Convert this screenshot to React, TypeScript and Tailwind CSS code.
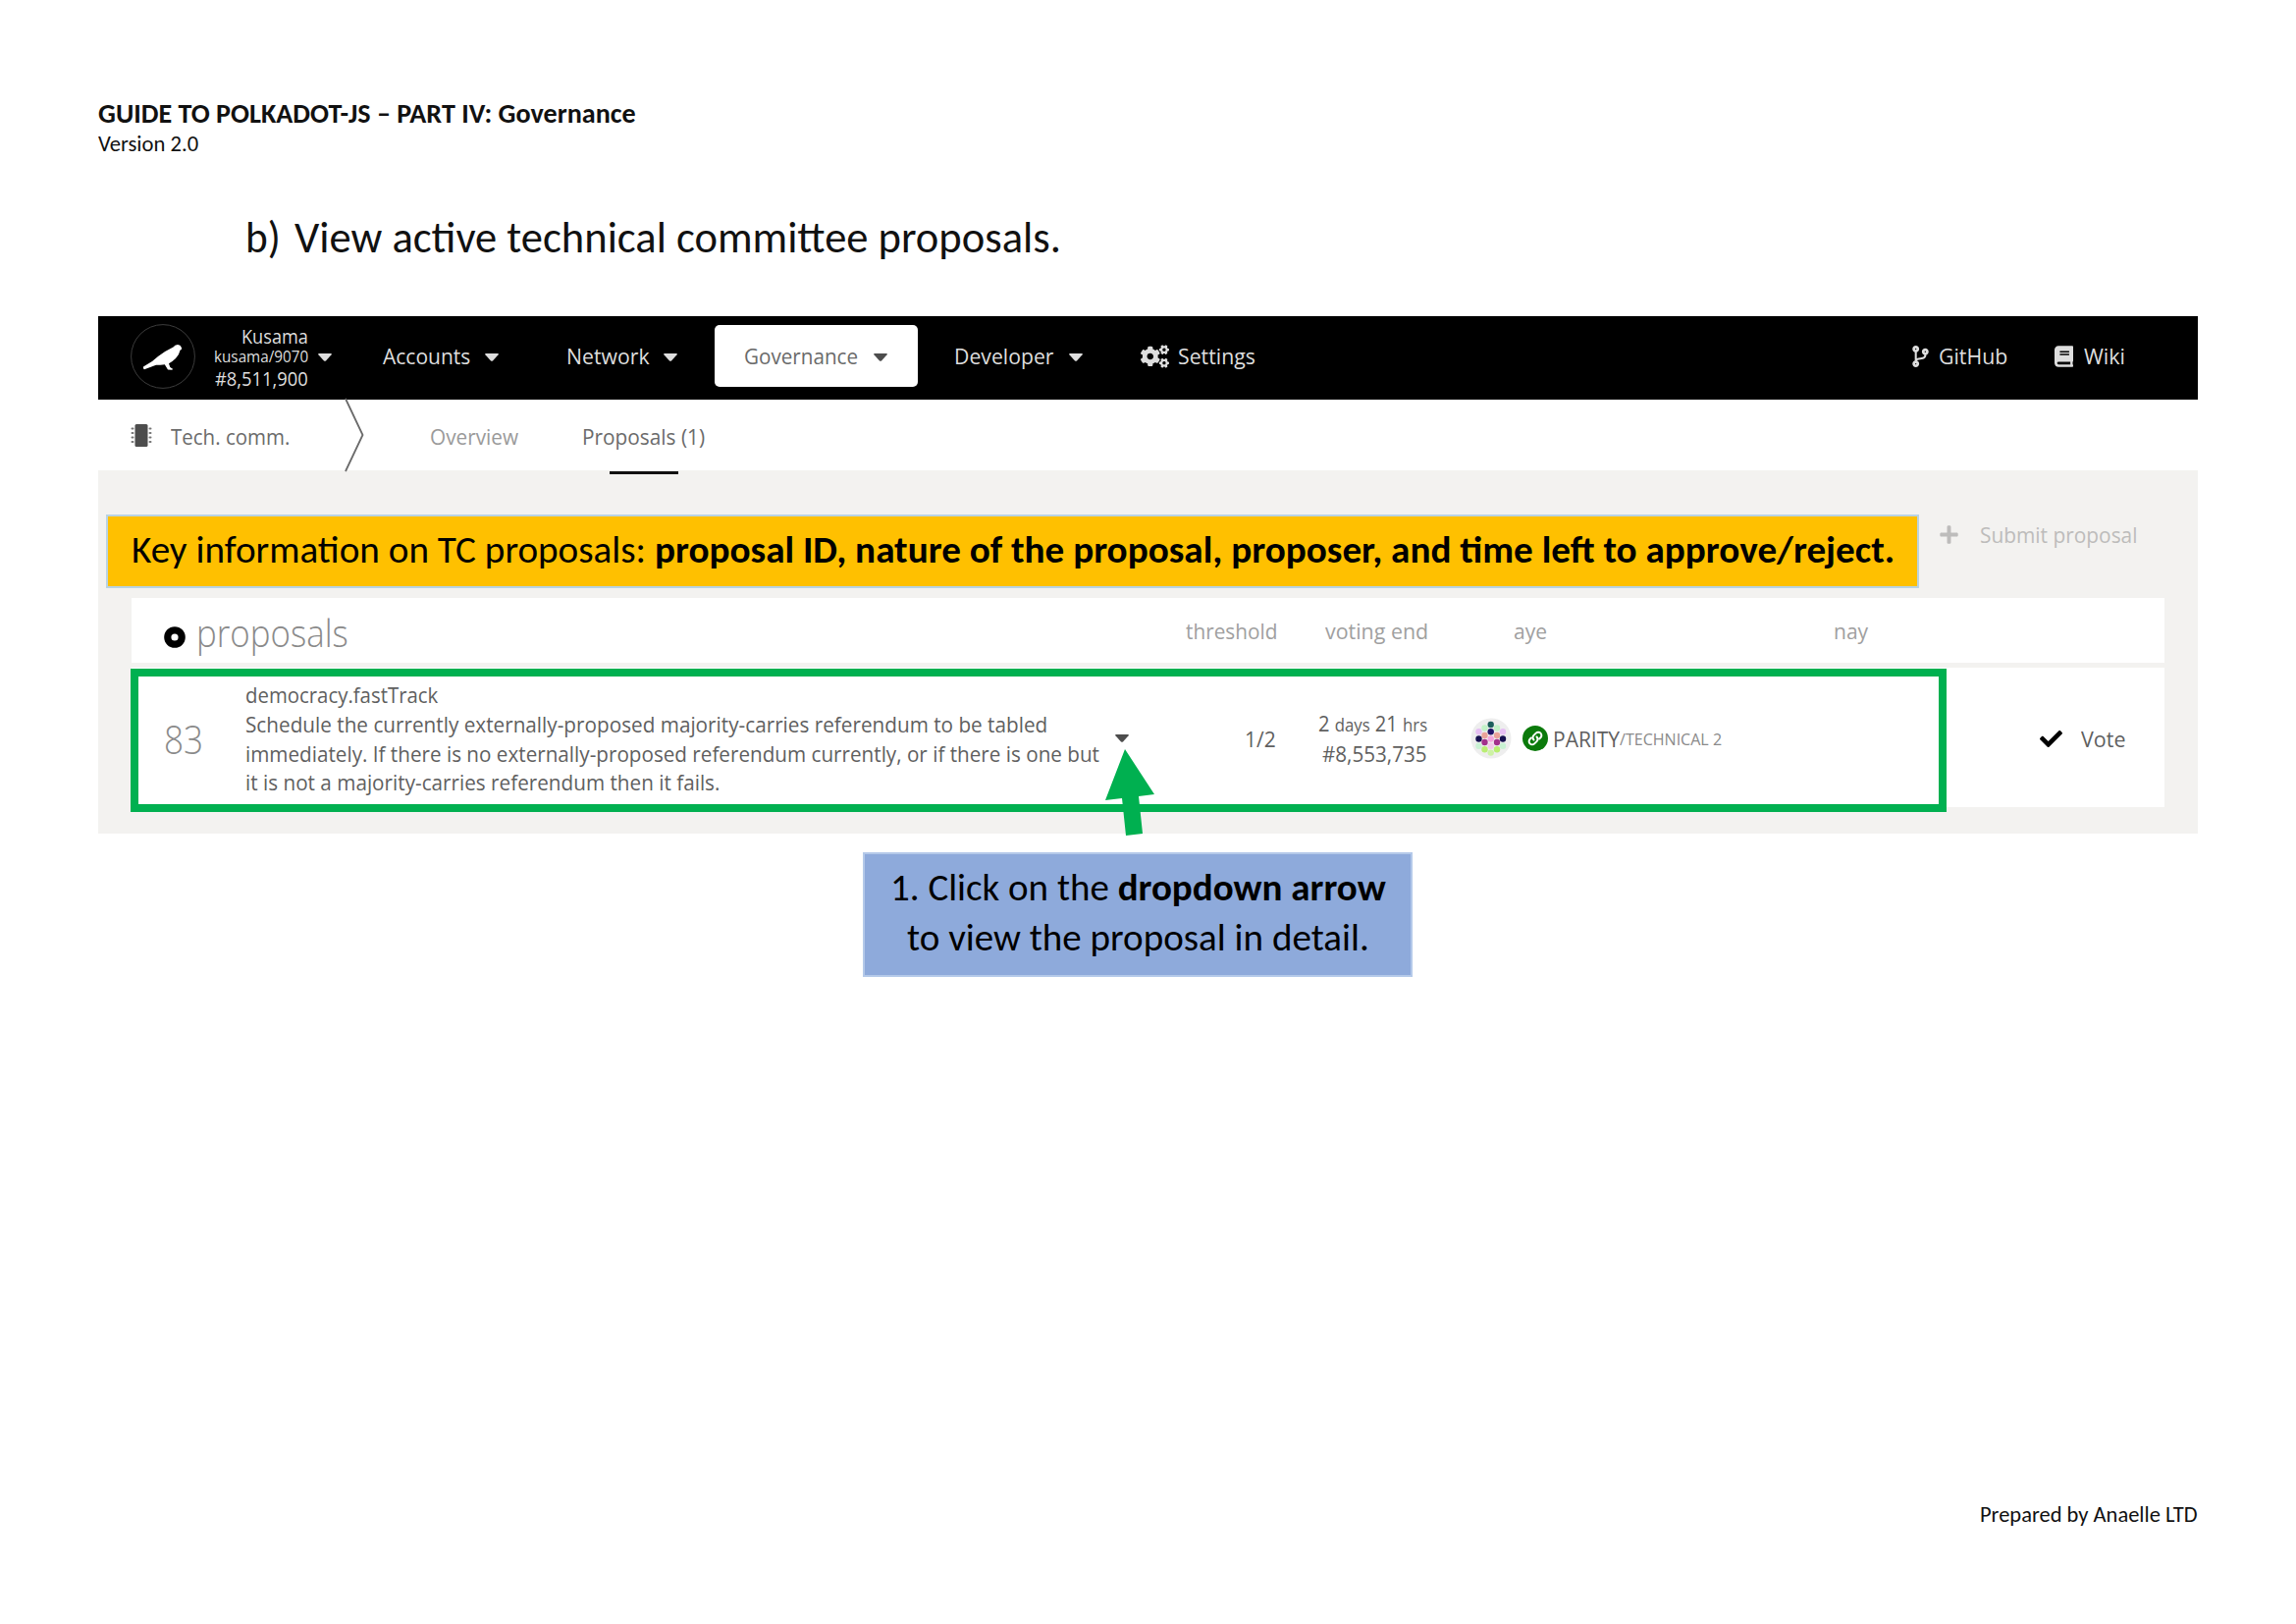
import { useLayoutEffect, useRef, useState, type ReactNode } from "react";
import { FaCheck, FaPlus, FaCogs, FaCodeBranch, FaBook } from "react-icons/fa";

/* One line of text condensed horizontally to a given advance width. */
function Line({ w, className = "", children }: { w: number; className?: string; children: ReactNode }) {
  const ref = useRef<HTMLSpanElement>(null);
  const [scale, setScale] = useState(1);
  useLayoutEffect(() => {
    const el = ref.current;
    if (el && el.offsetWidth > 0) setScale(w / el.offsetWidth);
  }, [w]);
  return (
    <span className={`block shrink-0 whitespace-nowrap ${className}`} style={{ width: w }}>
      <span ref={ref} className="inline-block origin-left" style={{ transform: `scaleX(${scale})` }}>
        {children}
      </span>
    </span>
  );
}

function Caret({ className = "" }: { className?: string }) {
  return (
    <svg viewBox="0 0 14 8" className={`h-[8px] w-[14px] shrink-0 ${className}`} fill="currentColor">
      <path d="M1 0h12q1.4.2.6 1.3L8 7.4q-1 .9-2 0L.4 1.3Q-.4.2 1 0Z" />
    </svg>
  );
}

function Bird() {
  return (
    <svg viewBox="0 0 66 66" className="ml-[33px] h-[66px] w-[66px] shrink-0">
      <circle cx="33" cy="33" r="32.4" fill="#000" stroke="#3c3c3c" strokeWidth="1" />
      <path
        fill="#fff"
        d="M13 43.500 22 38 28 33Q35 27.500 43.500 23.500Q45 21 48 21q3 .2 3.800 2.800l.4 1.700-1.700 1.200q-1 4.800-4.500 8.300-3 3-7 5.200l1.300 3.800 2.700 1.800-.6.900-4.400-.3-3.200-5.200q-4.500.5-8.800.6L14 46.300q-1.500-.8-1-2.800Z"
      />
    </svg>
  );
}

function Chip() {
  return (
    <svg viewBox="0 0 23 23" className="ml-[33px] mt-[1px] h-[23px] w-[23px] shrink-0" fill="#4d4d4d">
      <rect x="4.500" y="0" width="13" height="23" rx="1.500" />
      {[3.5, 8, 12.5, 17].map((y) => (
        <g key={y} fill="#777">
          <rect x="0.500" y={y} width="3" height="2" rx="1" />
          <rect x="18.500" y={y} width="3" height="2" rx="1" />
        </g>
      ))}
    </svg>
  );
}

const dots: [number, number, string][] = [
  [20.7, 7, "#1d5f5c"],
  [14.5, 10.5, "#c3f2c8"],
  [27, 10.5, "#c3f2c8"],
  [8.5, 14.3, "#e6bff3"],
  [20.7, 14.3, "#1f1468"],
  [33, 14.3, "#e6bff3"],
  [14.5, 18, "#eba39a"],
  [27, 18, "#eba39a"],
  [20.7, 21.5, "#f3a6dd"],
  [8.5, 21.5, "#16104f"],
  [33, 21.5, "#16104f"],
  [14.5, 25, "#a3308c"],
  [27, 25, "#a3308c"],
  [8.5, 28.7, "#c9f2d3"],
  [33, 28.7, "#c9f2d3"],
  [20.7, 28.7, "#f3c9ea"],
  [14.5, 32.3, "#b9ee72"],
  [27, 32.3, "#b9ee72"],
  [20.7, 35.6, "#cdf2a4"],
];

function Identicon() {
  return (
    <svg viewBox="0 0 42 42" className="ml-[44px] h-[42px] w-[42px] shrink-0">
      <circle cx="21" cy="21" r="20.5" fill="#eeeeee" />
      {dots.map(([x, y, c], i) => (
        <circle key={i} cx={x} cy={y} r="3.2" fill={c} />
      ))}
    </svg>
  );
}

function LinkBadge() {
  return (
    <svg viewBox="0 0 26 26" className="ml-[11px] h-[26px] w-[26px] shrink-0" fill="none">
      <circle cx="13" cy="13" r="13" fill="#0b7a0b" />
      <g stroke="#fff" strokeWidth="2" strokeLinecap="round">
        <path d="M11.5 14.5a3.2 3.2 0 0 1 0-4.600l2.300-2.300a3.200 3.200 0 0 1 4.600 4.600l-1.300 1.300" />
        <path d="M14.5 11.5a3.2 3.2 0 0 1 0 4.600l-2.300 2.300a3.200 3.200 0 0 1-4.600-4.600l1.300-1.300" />
      </g>
    </svg>
  );
}

function NavBar() {
  return (
    <nav className="flex h-[85px] items-center bg-black pb-[4px] text-[21px] leading-[30px] text-[#dedede]">
      <Bird />
      <div className="ml-[17px] flex w-[98px] flex-col items-end pt-[5px] text-[19.5px]">
        <Line w={68} className="leading-[20px]">Kusama</Line>
        <Line w={96} className="text-[17px] leading-[20px]">kusama/9070</Line>
        <Line w={95} className="leading-[25px]">#8,511,900</Line>
      </div>
      <Caret className="ml-[10px] mt-[3px]" />
      <Line w={89} className="ml-[52px]">Accounts</Line>
      <Caret className="ml-[15px] mt-[3px]" />
      <Line w={85} className="ml-[69px]">Network</Line>
      <Caret className="ml-[14px] mt-[3px]" />
      <div className="ml-[38px] flex h-[63px] w-[207px] shrink-0 items-center rounded-[5px] bg-white text-[#6a6a6a]">
        <Line w={116} className="ml-[30px]">Governance</Line>
        <Caret className="ml-[16px] mt-[3px] text-[#4d4d4d]" />
      </div>
      <Line w={101} className="ml-[37px]">Developer</Line>
      <Caret className="ml-[16px] mt-[3px]" />
      <FaCogs className="ml-[59px] h-[24px] w-[29px] shrink-0" />
      <Line w={79} className="ml-[9px]">Settings</Line>
      <FaCodeBranch className="ml-[668px] h-[22px] w-[19px] shrink-0" />
      <Line w={70} className="ml-[9px]">GitHub</Line>
      <FaBook className="ml-[48px] h-[22px] w-[19px] shrink-0" />
      <Line w={42} className="ml-[11px]">Wiki</Line>
    </nav>
  );
}

function Tabs() {
  return (
    <div className="flex h-[72px] items-center bg-white text-[21px] leading-[30px] text-[#6b6b6b]">
      <Chip />
      <Line w={121} className="ml-[18px] mt-[3px]">Tech. comm.</Line>
      <svg viewBox="0 0 20 74" className="ml-[56px] h-[74px] w-[20px] shrink-0 overflow-visible" fill="none">
        <path d="M1 0 18.5 37 1 74" stroke="#6a6a6a" strokeWidth="1.8" />
      </svg>
      <Line w={90} className="ml-[67px] mt-[3px] text-[#9a9a9a]">Overview</Line>
      <div className="relative ml-[65px] mt-[3px]">
        <Line w={125}>Proposals (1)</Line>
        <div className="absolute left-[28px] top-[50px] h-[3.5px] w-[70px] bg-[#111]" />
      </div>
    </div>
  );
}

function Proposals() {
  return (
    <section className="h-[370px] bg-[#f3f2f0] pl-[34px] pr-[34px] text-[21px] leading-[30px]">
      <div className="flex h-[130px] items-center justify-end pr-[28px] pt-[1px] text-[#bdbcbb]">
        <FaPlus className="h-[21px] w-[21px] shrink-0" />
        <Line w={160} className="ml-[21px]">Submit proposal</Line>
      </div>
      <div className="flex h-[66px] items-center bg-white text-[#a0a0a0]">
        <svg viewBox="0 0 22 22" className="ml-[33px] mt-[13px] h-[22px] w-[22px] shrink-0">
          <circle cx="11" cy="11" r="7.2" fill="#fff" stroke="#000" strokeWidth="7.2" />
        </svg>
        <Line w={155} className="ml-[11px] mt-[3px] text-[38px] font-light leading-[50px] text-[#8a8a8a]">proposals</Line>
        <Line w={93} className="ml-[853px] mt-[1px]">threshold</Line>
        <Line w={105} className="ml-[49px] mt-[1px]">voting end</Line>
        <Line w={34} className="ml-[87px] mt-[1px]">aye</Line>
        <Line w={35} className="ml-[292px] mt-[1px]">nay</Line>
      </div>
      <div className="mt-[5px] flex h-[142px] items-center bg-white pt-[2px] text-[#5f5f5f]">
        <Line w={40} className="ml-[33px] mt-[1px] text-[39.5px] font-light leading-[50px] text-[#8a8a8a]">83</Line>
        <div className="ml-[43px] mt-[3px] flex w-[880px] shrink-0 flex-col leading-[29.8px]">
          <Line w={196}>democracy.fastTrack</Line>
          <Line w={817}>Schedule the currently externally-proposed majority-carries referendum to be tabled</Line>
          <Line w={870}>immediately. If there is no externally-proposed referendum currently, or if there is one but</Line>
          <Line w={483}>it is not a majority-carries referendum then it fails.</Line>
        </div>
        <Caret className="ml-[6px] text-[#4d4d4d]" />
        <Line w={32} className="ml-[118px] mt-[1px]">1/2</Line>
        <div className="ml-[43px] flex w-[111px] shrink-0 flex-col items-end">
          <Line w={111}>
            2 <span className="text-[17.5px]">days</span> 21 <span className="text-[17.5px]">hrs</span>
          </Line>
          <Line w={107}>#8,553,735</Line>
        </div>
        <Identicon />
        <LinkBadge />
        <Line w={68} className="ml-[5px] mt-[1px]">PARITY</Line>
        <Line w={104} className="mt-[1px] text-[16.5px] text-[#8a8a8a]">/TECHNICAL 2</Line>
        <FaCheck className="ml-[324px] h-[23px] w-[23px] shrink-0 text-black" />
        <Line w={45} className="ml-[19px] mt-[1px]">Vote</Line>
      </div>
    </section>
  );
}

export default function App() {
  return (
    <main className="h-[1654px] w-[2339px] overflow-hidden bg-white px-[100px] pt-[101px] font-['Carlito','Lato',sans-serif] text-[#111]">
      <header>
        <Line w={548} className="text-[27.8px] font-bold leading-[30px]">GUIDE TO POLKADOT-JS – PART IV: Governance</Line>
        <Line w={102} className="text-[22.2px] leading-[31px]">Version 2.0</Line>
      </header>
      <h1 className="mt-[50px] flex pl-[150px] text-[44.4px] leading-[60px]">
        <Line w={36}>b)</Line>
        <Line w={781} className="ml-[14px]">View active technical committee proposals.</Line>
      </h1>
      <div className="relative mt-[50px] font-['Open_Sans','Noto_Sans',sans-serif]">
        <NavBar />
        <Tabs />
        <Proposals />
        <div className="absolute left-[8px] top-[202px] h-[75px] w-[1847px] border-2 border-[#b9d3e3] bg-[#ffc000] pl-[24px] font-['Carlito','Lato',sans-serif] text-[38.9px] leading-[68px] text-black">
          <Line w={1796}>
            Key information on TC proposals: <b>proposal ID, nature of the proposal, proposer, and time left to approve/reject.</b>
          </Line>
        </div>
        <div className="absolute left-[33px] top-[359px] h-[146px] w-[1850px] border-[8.5px] border-[#00b050]" />
        <svg viewBox="0 0 50 90" className="absolute left-[1026px] top-[440px] h-[90px] w-[50px]" fill="#00b050">
          <path d="M20 1 50 47 34 49 38 87 21 89 17 51 0 53Z" />
        </svg>
      </div>
      <aside className="ml-[779px] mt-[19px] flex h-[127px] w-[560px] flex-col items-center border-2 border-[#b4c9e9] bg-[#8eaadb] pt-[8px] text-[38.9px] leading-[51px] text-black">
        <Line w={505}>
          1. Click on the <b>dropdown arrow</b>
        </Line>
        <Line w={471}>to view the proposal in detail.</Line>
      </aside>
      <footer className="mt-[533px] flex justify-end text-[22.2px] leading-[30px]">
        <Line w={222}>Prepared by Anaelle LTD</Line>
      </footer>
    </main>
  );
}
